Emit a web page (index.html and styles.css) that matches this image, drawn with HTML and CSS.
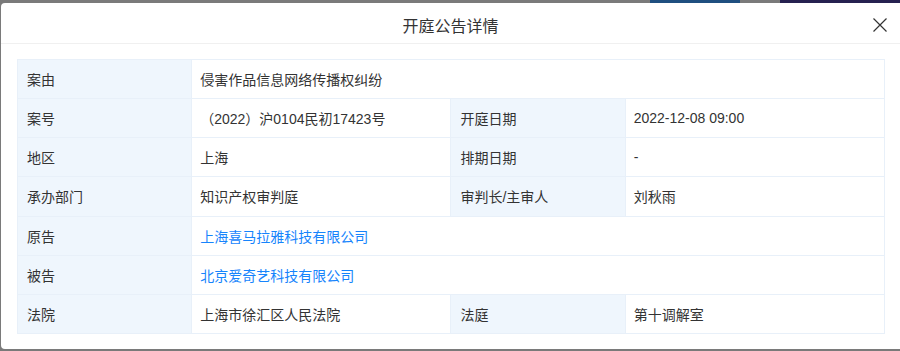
FILE: index.html
```html
<!DOCTYPE html>
<html lang="zh-CN">
<head>
    <meta charset="UTF-8">
    <meta name="viewport" content="width=device-width, initial-scale=1.0">
    <title>开庭公告详情</title>
    <link rel="stylesheet" href="styles.css">
</head>
<body>
    <div class="peek">
        <span class="peek-btn"></span>
        <span class="peek-dark"></span>
    </div>
    <div class="modal">
        <div class="modal-header">
            <span></span>
            <h2>开庭公告详情</h2>
            <button class="close" aria-label="关闭">
                <svg width="14" height="14" viewBox="0 0 14 14">
                    <path d="M0.5 0.5 L13.5 13.5 M13.5 0.5 L0.5 13.5" stroke="#333" stroke-width="1.2" fill="none"/>
                </svg>
            </button>
        </div>
        <div class="modal-body">
            <table class="detail">
                <colgroup>
                    <col class="c-label">
                    <col class="c-value">
                    <col class="c-label">
                    <col class="c-value">
                </colgroup>
                <tr>
                    <td class="label">案由</td>
                    <td colspan="3">侵害作品信息网络传播权纠纷</td>
                </tr>
                <tr>
                    <td class="label">案号</td>
                    <td>（2022）沪0104民初17423号</td>
                    <td class="label">开庭日期</td>
                    <td>2022-12-08 09:00</td>
                </tr>
                <tr>
                    <td class="label">地区</td>
                    <td>上海</td>
                    <td class="label">排期日期</td>
                    <td>-</td>
                </tr>
                <tr>
                    <td class="label">承办部门</td>
                    <td>知识产权审判庭</td>
                    <td class="label">审判长/主审人</td>
                    <td>刘秋雨</td>
                </tr>
                <tr>
                    <td class="label">原告</td>
                    <td colspan="3"><a href="#">上海喜马拉雅科技有限公司</a></td>
                </tr>
                <tr>
                    <td class="label">被告</td>
                    <td colspan="3"><a href="#">北京爱奇艺科技有限公司</a></td>
                </tr>
                <tr>
                    <td class="label">法院</td>
                    <td>上海市徐汇区人民法院</td>
                    <td class="label">法庭</td>
                    <td>第十调解室</td>
                </tr>
            </table>
        </div>
    </div>
</body>
</html>
```

FILE: styles.css
```css
html, body {
    margin: 0;
    height: 100%;
    overflow: hidden;
}
body {
    font-family: "Liberation Sans", "Noto Sans CJK SC", sans-serif;
    background: #7a7a7a;
    color: #333;
}
.peek {
    display: flex;
    height: 3px;
}
.peek-btn {
    width: 90px;
    margin-left: 650px;
    background: #1f4f80;
}
.peek-dark {
    flex: 1;
    margin-left: 40px;
    background: #262150;
}
.modal {
    margin-left: 1px;
    width: 899px;
    height: 346px;
    background: #fff;
    border-radius: 4px 0 0 4px;
    box-sizing: border-box;
}
.modal-header {
    display: grid;
    grid-template-columns: 1fr auto 1fr;
    align-items: center;
    height: 40px;
    border-bottom: 1px solid #f0f0f0;
}
.modal-header h2 {
    margin: 0;
    padding-top: 4px;
    font-size: 16px;
    font-weight: normal;
    color: #333;
}
.close {
    justify-self: end;
    margin-right: 13px;
    margin-top: 4px;
    padding: 0;
    border: none;
    background: none;
    display: flex;
    cursor: pointer;
}
.modal-body {
    padding: 15px 15px 0 16px;
}
.detail {
    width: 868px;
    height: 275px;
    border-collapse: collapse;
    table-layout: fixed;
    font-size: 14px;
}
.c-label {
    width: 174px;
}
.c-value {
    width: 259px;
}
.detail td {
    padding: 0 8px;
    border: 1px solid #e8f0f9;
    color: #333;
    white-space: nowrap;
}
.detail td.label {
    background: #eff6fd;
    padding-left: 9px;
}
.detail a {
    color: #1684fc;
    text-decoration: none;
}
```
